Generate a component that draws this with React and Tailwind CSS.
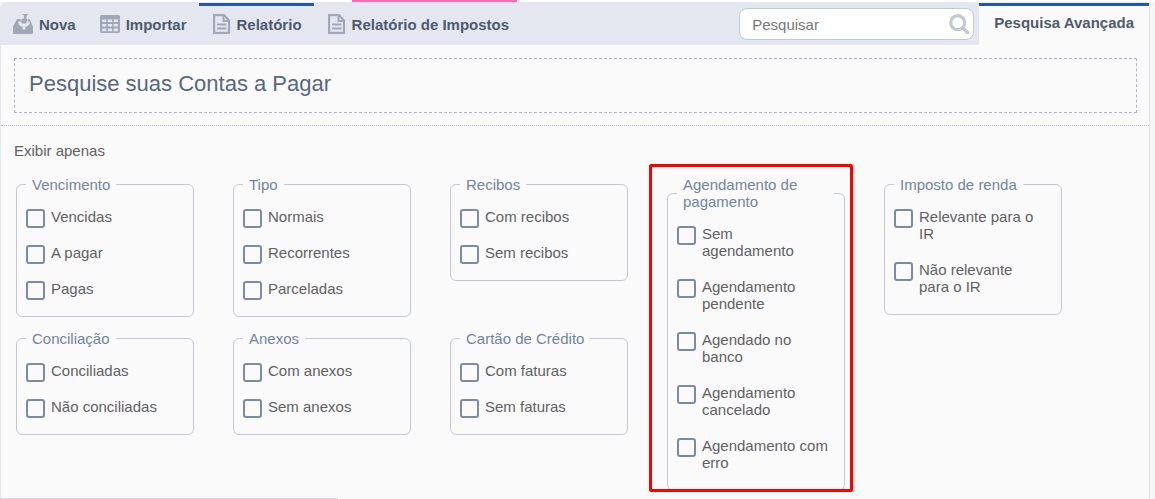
import React from 'react';

function TrayIcon() {
  return (
    <svg className="h-5 w-5 shrink-0" viewBox="0 0 20 20" aria-hidden="true">
      <path d="M4.200 5H16.600L20 12.400V18.500Q20 20 18.500 20H1.500Q0 20 0 18.500V12.400Z" fill="#a0a8b7" />
      <path d="M9.500 0H15.500Q13.400 1.200 13.400 3.200V8H9V6.200Q11.600 4.600 11.200 2Z" fill="#a0a8b7" />
      <path d="M5.400 7.600H8.600V9.400H13.400V7.600H16.600V10L14 12.600H12.400V15.600H9.600V12.600H8L5.400 10Z" fill="#e4e7ef" />
      <path d="M8.200 3.800V6.600M14.400 3.800V6.600" stroke="#e4e7ef" strokeWidth="1" />
    </svg>
  );
}

function TableIcon() {
  return (
    <svg className="h-5 w-5 shrink-0" viewBox="0 0 20 20" aria-hidden="true">
      <rect y="1" width="20" height="18" rx="1.500" fill="#a0a8b7" />
      <g fill="#e4e7ef">
        {[5.4, 10, 14.6].map((y) =>
          [2.1, 7.9, 13.7].map((x) => (
            <rect key={`${x}-${y}`} x={x} y={y} width="4.200" height="2.600" rx=".5" />
          ))
        )}
      </g>
    </svg>
  );
}

function DocumentIcon() {
  return (
    <svg className="h-5 w-5 shrink-0" viewBox="0 0 20 20" fill="none" stroke="#a0a8b7" aria-hidden="true">
      <path d="M3.100 1.100H13L18 6.500V18.900H3.100Z" strokeWidth="2.200" />
      <path d="M12.500 1V7H18" strokeWidth="2" />
      <path d="M6 10.500H15.500M6 14.500H15.500" strokeWidth="1.800" />
    </svg>
  );
}

function SearchIcon() {
  return (
    <svg className="h-5 w-5" viewBox="0 0 20 20" fill="none" stroke="#c3c8d4" aria-hidden="true">
      <circle cx="8.700" cy="8.700" r="7" strokeWidth="3.200" />
      <path d="M14 14L18.500 18.500" strokeWidth="3.400" strokeLinecap="round" />
    </svg>
  );
}

const actions = [
  { label: 'Nova', Icon: TrayIcon },
  { label: 'Importar', Icon: TableIcon },
  { label: 'Relatório', Icon: DocumentIcon, active: true },
  { label: 'Relatório de Impostos', Icon: DocumentIcon },
];

const groups = [
  { title: 'Vencimento', options: ['Vencidas', 'A pagar', 'Pagas'] },
  { title: 'Tipo', options: ['Normais', 'Recorrentes', 'Parceladas'] },
  { title: 'Recibos', options: ['Com recibos', 'Sem recibos'] },
  {
    title: 'Agendamento de pagamento',
    highlighted: true,
    options: [
      'Sem agendamento',
      'Agendamento pendente',
      'Agendado no banco',
      'Agendamento cancelado',
      'Agendamento com erro',
    ],
  },
  { title: 'Imposto de renda', options: ['Relevante para o IR', 'Não relevante para o IR'] },
  { title: 'Conciliação', options: ['Conciliadas', 'Não conciliadas'] },
  { title: 'Anexos', options: ['Com anexos', 'Sem anexos'] },
  { title: 'Cartão de Crédito', options: ['Com faturas', 'Sem faturas'] },
];

function FilterGroup({ title, options, highlighted }) {
  return (
    <div className={highlighted ? 'relative row-span-2' : ''}>
      <fieldset className="min-w-0 rounded-md border border-[#c3c8d5] pr-[10px] pb-[19px] pl-[9px]">
        <legend className="px-[6px] text-[#7384a0]">{title}</legend>
        <div className="flex flex-col gap-[19px] pt-[15px] pr-[6px]">
          {options.map((option) => (
            <label key={option} className="flex items-start gap-[6px]">
              <input
                type="checkbox"
                className="mt-px -mb-[3px] h-[19px] w-[19px] shrink-0 appearance-none rounded-[3px] border-2 border-[#7c8ba5] checked:bg-[#7c8ba5]"
              />
              <span>{option}</span>
            </label>
          ))}
        </div>
      </fieldset>
      {highlighted && (
        <div className="pointer-events-none absolute -top-3 -right-2 -bottom-px -left-[18px] rounded-[2px] border-[3px] border-[#ff0000]" />
      )}
    </div>
  );
}

export default function App() {
  return (
    <div className="min-h-screen bg-white font-['Liberation_Sans',Arial,sans-serif] text-[15px] leading-[17px] text-[#5f6163]">
      <div className="flex h-[2px] pl-[352px]">
        <div className="w-[165px] bg-[#ff69b4]" />
      </div>
      <div className="bg-[#f5f5f6] pr-[5px]">
        <main className="min-h-[calc(100vh-2px)] rounded-tl-md border-x border-l-[#e4e7ef] border-r-[#e2e3e8] bg-[#fafafa]">
          <header className="flex h-[43px] rounded-tl-md bg-[#e4e7ef] pt-px font-bold text-[#4e5a6e]">
            <nav className="flex flex-1">
              {actions.map(({ label, Icon, active }) => (
                <a
                  key={label}
                  href="#"
                  className={
                    active
                      ? 'flex items-center gap-[6px] border-t-[3px] border-[#2159a8] px-3 pb-[3px]'
                      : 'flex items-center gap-[6px] border-t-[3px] border-transparent px-3 pb-[3px]'
                  }
                >
                  <Icon />
                  <span>{label}</span>
                </a>
              ))}
            </nav>
            <div className="mr-[5px] flex h-8 w-[235px] items-center self-center rounded-lg border border-[#c3c8d5] bg-white pr-1 pl-3 font-normal">
              <input
                type="search"
                aria-label="Pesquisar"
                placeholder="Pesquisar"
                className="min-w-0 flex-1 outline-none placeholder:text-[#777777]"
              />
              <button type="button" aria-label="Buscar">
                <SearchIcon />
              </button>
            </div>
            <a href="#" className="flex items-center border-t-[3px] border-[#2159a8] bg-[#fafafa] px-[15px] pb-[7px]">
              Pesquisa Avançada
            </a>
          </header>

          <div className="border-b border-dotted border-[#b9bcc4] pt-[13px] pr-3 pb-3 pl-[13px]">
            <h1 className="border border-dashed border-[#aab5cb] px-[14px] pt-[11px] pb-[14px] text-[22px] leading-[28px] text-[#566882]">
              Pesquise suas Contas a Pagar
            </h1>
          </div>

          <section className="pt-4 pb-1">
            <h2 className="pl-[13px]">Exibir apenas</h2>
            <div className="mt-[17px] grid grid-cols-[repeat(5,minmax(0,178px))] grid-rows-[auto_1fr] gap-x-[39px] gap-y-[13px] pl-[15px]">
              {groups.map((group) => (
                <FilterGroup key={group.title} {...group} />
              ))}
            </div>
          </section>
        </main>
      </div>
      <div className="fixed bottom-0 left-0 h-px w-[338px] bg-[#d9dadd]" />
    </div>
  );
}
